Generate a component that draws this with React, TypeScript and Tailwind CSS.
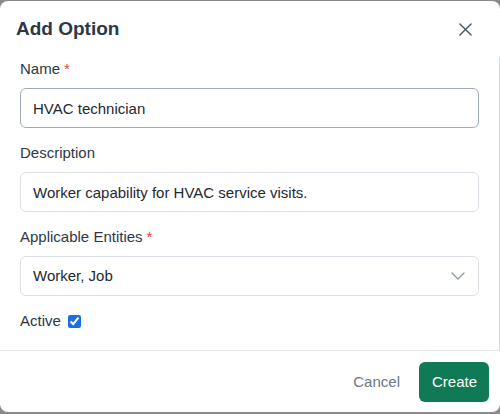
import { useState } from 'react'

function CloseIcon() {
  return (
    <svg viewBox="0 0 14 14" className="h-[13px] w-[13px]" fill="none">
      <path d="M1 1L13 13M13 1L1 13" stroke="#4a5568" strokeWidth="1.5" strokeLinecap="round" />
    </svg>
  )
}

function Chevron() {
  return (
    <svg viewBox="0 0 14 8" className="h-[8px] w-[14px]" fill="none">
      <path d="M1 1L7 7L13 1" stroke="#8e99ab" strokeWidth="1.4" strokeLinecap="round" strokeLinejoin="round" />
    </svg>
  )
}

function Label({ text, required }: { text: string; required?: boolean }) {
  return (
    <label className="mb-2 block h-[22px] text-[15px] leading-[22px] text-[#2d3748]">
      {text}
      {required && <span className="ml-1 text-[#e53e3e]">*</span>}
    </label>
  )
}

export default function App() {
  const [name, setName] = useState('HVAC technician')
  const [desc, setDesc] = useState('Worker capability for HVAC service visits.')
  const [active, setActive] = useState(true)

  return (
    <div
      className="h-[414px] w-[500px] overflow-hidden bg-[#8a8a8a] pt-[1px]"
      style={{ fontFamily: '"Liberation Sans", Arial, sans-serif' }}
    >
      <div className="flex h-[411px] w-[500px] flex-col rounded-lg bg-white">
        <div className="flex h-[56px] items-center justify-between pl-4 pr-[28px]">
          <h2 className="text-[19px] font-bold text-[#2d3748]">Add Option</h2>
          <button className="flex items-center justify-center">
            <CloseIcon />
          </button>
        </div>

        <div className="flex flex-col gap-[14px] border-r border-[#d9dde3] px-5 pt-[1px] pb-[18px]">
          <div>
            <Label text="Name" required />
            <input
              value={name}
              onChange={(e) => setName(e.target.value)}
              className="h-10 w-full rounded-md border border-[#a0aab8] px-3 text-[15px] text-[#1f2733] outline-none"
            />
          </div>
          <div>
            <Label text="Description" />
            <input
              value={desc}
              onChange={(e) => setDesc(e.target.value)}
              className="h-10 w-full rounded-md border border-[#dde1e7] px-3 text-[15px] text-[#1f2733] outline-none"
            />
          </div>
          <div>
            <Label text="Applicable Entities" required />
            <div className="flex h-10 w-full items-center justify-between rounded-md border border-[#dde1e7] pl-3 pr-[13px] text-[15px] text-[#1f2733]">
              <span>Worker, Job</span>
              <Chevron />
            </div>
          </div>
          <div className="flex h-[22px] items-center gap-[7px] text-[15px] text-[#2d3748]">
            <span>Active</span>
            <input
              type="checkbox"
              checked={active}
              onChange={(e) => setActive(e.target.checked)}
              className="m-0 h-[13px] w-[13px] accent-[#1a6fe6]"
            />
          </div>
        </div>

        <div className="flex flex-1 items-start justify-end gap-[6px] border-t border-[#e2e6eb] pt-[11px] pr-[11px]">
          <button className="h-10 rounded-md px-[13px] text-[15px] text-[#6b7688]">Cancel</button>
          <button className="h-10 rounded-md bg-[#0f7a55] pl-[13px] pr-[12px] text-[15px] text-white">Create</button>
        </div>
      </div>
    </div>
  )
}
